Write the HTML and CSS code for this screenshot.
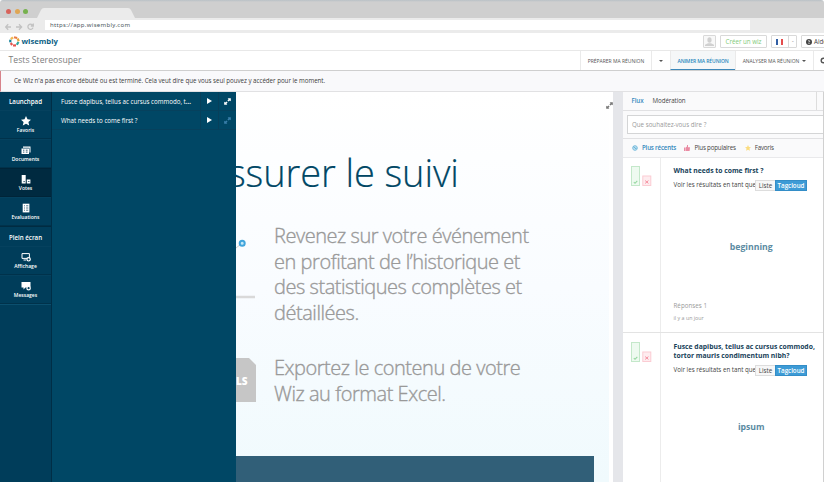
FILE: index.html
```html
<!DOCTYPE html>
<html lang="fr">
<head>
<meta charset="utf-8">
<title>Wisembly</title>
<link rel="stylesheet" href="styles.css">
</head>
<body>
<svg class="defs" width="0" height="0">
  <symbol id="expand" viewBox="0 0 8 8"><path d="M4.2 0.2H7.8V3.8L6.6 2.8 5.2 4.1 3.9 2.8 5.2 1.4ZM0.2 4.2 1.4 5.2 2.8 3.9 4.1 5.2 2.8 6.6 3.8 7.8H0.2Z"/></symbol>
  <symbol id="votes" viewBox="0 0 21 21"><rect x=".5" y=".5" width="8" height="19" fill="#eefaf0" stroke="#c4e8ca"/><path d="M2.8 16 4 17.3 6.3 14.8" fill="none" stroke="#94d79f" stroke-width="1.1"/><rect x="11.8" y="10" width="8" height="9.5" fill="#feecef" stroke="#fbccd3"/><path d="M14.2 14.6 17.4 17.4M17.4 14.6 14.2 17.4" stroke="#f68c9d" stroke-width="1"/></symbol>
</svg>
<div class="window">
  <div class="titlebar"><i class="dot red"></i><i class="dot amber"></i><i class="dot green"></i>
    <svg class="tab" width="100" height="10"><path d="M0 10 4 2Q5 0 7 0H91Q93 0 94 2L98 10Z" fill="#ebebeb"/></svg>
  </div>
  <div class="toolbar">
    <svg class="browser-nav" width="32" height="8" fill="none" stroke="#c2c2c2" stroke-width="1.3"><path d="M6 4H.8M3.2 1.3 .7 4 3.2 6.7M11 4H16.5M14 1.3 16.6 4 14 6.7M27.7 2.4A2.6 2.6 0 1 0 28 4.6M28.3.6V3H25.8"/></svg>
    <div class="url">https://app.wisembly.com</div>
  </div>
  <header class="brandbar">
    <svg class="mark" width="11" height="11" viewBox="0 0 11 11" fill="none" stroke-width="2.2"><path d="M1.8 3.2 4 1.3" stroke="#f3b94f"/><path d="M5 1.2 8.2 2" stroke="#e97b45"/><path d="M8.6 2.5 9.8 5.2" stroke="#e8a33c"/><path d="M9.5 6 7.8 8.8" stroke="#2ba7a0"/><path d="M7 9.4 4 9.5" stroke="#e5544e"/><path d="M3.2 9 1.7 7" stroke="#e5544e"/><path d="M1.3 6.3V3.7" stroke="#14839b"/></svg>
    <span class="brand">wisembly</span>
    <span class="box avatar"><svg width="9" height="9" fill="#d0d0d0"><ellipse cx="4.5" cy="3" rx="2.1" ry="2.8"/><path d="M0 9V7.8L3 6.3H6L9 7.8V9Z"/></svg></span>
    <span class="box create">Créer un wiz</span>
    <span class="box lang"><i class="flag"></i><b>-</b></span>
    <span class="box help"><svg width="6" height="6"><circle cx="3" cy="3" r="3" fill="#444"/><path d="M2 2.2Q3 .9 3.8 2.1 3.6 2.8 3 3.4M3 4V5" fill="none" stroke="#fff" stroke-width=".8"/></svg>Aide</span>
  </header>
  <nav class="wizbar">
    <span class="wiz">Tests Stereosuper</span>
    <span class="step prepare">PRÉPARER MA RÉUNION</span>
    <span class="step drop"><i class="caret"></i></span>
    <span class="step active">ANIMER MA RÉUNION</span>
    <span class="step analyse">ANALYSER MA RÉUNION<i class="caret"></i></span>
    <span class="step gear"><svg width="7" height="7"><circle cx="3.5" cy="3.5" r="2.3" fill="none" stroke="#555" stroke-width="1.4"/></svg></span>
  </nav>
  <div class="alert">Ce Wiz n'a pas encore débuté ou est terminé. Cela veut dire que vous seul pouvez y accéder pour le moment.</div>
  <main class="main">
    <aside class="launchpad">
      <h2>Launchpad</h2>
      <div class="tool"><svg width="10" height="10"><path d="M5 0 6.5 3.3 10 3.7 7.4 6 8.2 9.6 5 7.8 1.8 9.6 2.6 6 0 3.7 3.5 3.3Z"/></svg>Favoris</div>
      <div class="tool"><svg width="10" height="10"><path d="M2 1.5H9.5V7.5H8.5V2.8H2ZM.5 3.5H8V9H.5Z"/><path d="M2 5.2H3.4M4.8 5.2H6.6M2 7.1H3.4M4.8 7.1H6.6" stroke="#003a56" stroke-width=".8"/></svg>Documents</div>
      <div class="tool current"><svg width="10" height="10"><path d="M.7 1H4.7V9.5H.7ZM5.8 5.5H9.4V9.5H5.8Z"/><path d="M2.3 7.6H4M6.9 7.5H8.5" stroke="#002a40" stroke-width=".7"/></svg>Votes</div>
      <div class="tool"><svg width="10" height="10"><path d="M1.7.7H8.4V9.4H1.7Z"/><path d="M3 2.8H4M5.1 2.8H7.3M3 5H4M5.1 5H7.3M3 7.2H4M5.1 7.2H7.3" stroke="#003a56" stroke-width=".7"/></svg>Evaluations</div>
      <h2 class="second">Plein écran</h2>
      <div class="tool"><svg width="10" height="10"><path d="M1 1.6H8.4V6.4H1Z" fill="none" stroke="#fff"/><path d="M2.5 8H5" stroke="#fff"/><circle cx="7.6" cy="7.3" r="1.7" stroke="#fff" stroke-width="1.2" class="hole"/></svg>Affichage</div>
      <div class="tool"><svg width="10" height="10"><path d="M.5 1H9.5V6.5H4.5L2.5 8.5V6.5H.5Z"/><circle cx="7.6" cy="7.2" r="1.7" stroke="#fff" stroke-width="1.2" class="hole"/></svg>Messages</div>
      <div class="end"></div>
    </aside>
    <section class="drawer">
      <div class="item"><span>Fusce dapibus, tellus ac cursus commodo, t<b>...</b></span><i><svg width="5" height="6"><path d="M0 0 5 3 0 6Z"/></svg></i><i><svg width="7" height="7"><use href="#expand"/></svg></i></div>
      <div class="item"><span>What needs to come first ?</span><i><svg width="5" height="6"><path d="M0 0 5 3 0 6Z"/></svg></i><i class="dim"><svg width="7" height="7"><use href="#expand"/></svg></i></div>
    </section>
    <section class="slide">
      <svg class="enlarge" width="7" height="7"><use href="#expand"/></svg>
      <h1>ssurer le suivi</h1>
      <div class="feature first">
        <svg width="21" height="64"><path d="M0 10 5 6" stroke="#ccc"/><circle cx="6.2" cy="5.2" r="2.5" fill="#c5e8f7" stroke="#41a5dc" stroke-width="2"/><path d="M0 59H19" stroke="#d9d9d9" stroke-width="2.5"/></svg>
        <p>Revenez sur votre événement<br>en profitant de l’historique et<br>des statistiques complètes et<br>détaillées.</p>
      </div>
      <div class="feature excel">
        <div class="file">LS</div>
        <p>Exportez le contenu de votre<br>Wiz au format Excel.</p>
      </div>
      <div class="slide-foot"></div>
    </section>
    <aside class="feed">
      <div class="tabs"><b>Flux</b><span>Modération</span></div>
      <div class="compose"><div class="field">Que souhaitez-vous dire ?</div></div>
      <div class="sort">
        <svg width="6" height="6"><circle cx="3" cy="3" r="2.3" fill="#c6e4f2" stroke="#78bcdd"/><path d="M1.5 1.5 3 3.3H4.5" fill="none" stroke="#5caed6"/></svg><b>Plus récents</b>
        <svg class="thumb" width="6" height="6" fill="#ea8ba3"><path d="M0 2.5H1.3V6H0ZM1.7 2.6 3 1.5V0H4V2.3H6L5.6 6H1.7Z"/></svg><span>Plus populaires</span>
        <svg class="star" width="6" height="6" viewBox="0 0 10 10" fill="#fbdc7e"><path d="M5 0 6.5 3.3 10 3.7 7.4 6 8.2 9.6 5 7.8 1.8 9.6 2.6 6 0 3.7 3.5 3.3Z"/></svg><span>Favoris</span>
      </div>
      <article class="post">
        <div class="kind"><svg width="21" height="21"><use href="#votes"/></svg></div>
        <div class="body"><h3>What needs to come first ?</h3>
          <div class="view"><span>Voir les résultats en tant que</span><i>Liste</i><b>Tagcloud</b></div>
          <div class="cloud">beginning</div><div class="answers">Réponses 1</div><div class="time">il y a un jour</div></div>
      </article>
      <article class="post long">
        <div class="kind"><svg width="21" height="21"><use href="#votes"/></svg></div>
        <div class="body"><h3>Fusce dapibus, tellus ac cursus commodo,<br>tortor mauris condimentum nibh?</h3>
          <div class="view"><span>Voir les résultats en tant que</span><i>Liste</i><b>Tagcloud</b></div>
          <div class="cloud">ipsum</div></div>
      </article>
    </aside>
  </main>
</div>
</body>
</html>
```

FILE: styles.css
```css
* { box-sizing: border-box; }
body { margin: 0; overflow: hidden; font-family: "Open Sans", "Noto Sans", sans-serif; background: #fff; }
h1, h2, h3, p { margin: 0; font-weight: inherit; }
i { font-style: normal; }
svg { display: block; flex: none; }
.defs { position: absolute; }
.window { width: 824px; height: 482px; display: flex; flex-direction: column; overflow: hidden; white-space: nowrap; }
.titlebar { height: 18px; flex: none; background: linear-gradient(#b9c1c6 0, #cfcfcf 2px); border-radius: 3px 3px 0 0; display: flex; align-items: center; padding: 4px 0 0 6px; gap: 3.5px; }
.dot { width: 5px; height: 5px; border-radius: 50%; }
.red { background: #d8635b; } .amber { background: #dfa654; } .green { background: #76b14d; }
.tab { align-self: flex-end; margin-left: 5px; }
.toolbar { height: 15px; flex: none; background: #ebebeb; display: flex; align-items: flex-start; padding-top: 2px; }
.browser-nav { margin: 3px 8px 0 5px; }
.url { width: 705px; height: 10px; background: #fff; font-size: 6px; line-height: 11px; padding-left: 5px; color: #4b5760; font-family: "Noto Sans"; letter-spacing: .31px; }
.brandbar { height: 18px; flex: none; display: flex; align-items: center; background: #fff; border-bottom: 1px solid #e8e8e8; padding-left: 9px; }
.brand { margin: -2px 0 0 1.5px; width: 681.5px; flex: none; font-weight: 700; font-size: 7.7px; line-height: 14px; color: #0c5f85; }
.box { height: 13px; flex: none; border: 1px solid #d9d9d9; border-radius: 1px; display: flex; align-items: center; justify-content: center; }
.avatar { width: 13px; background: #f8f8f8; }
.create { width: 47px; margin-left: 4px; color: #82ca79; font-size: 6.2px; }
.lang { width: 26px; margin-left: 4px; justify-content: flex-start; font-size: 5px; color: #aaa; }
.flag { width: 7px; height: 6px; margin: 0 5px 0 4px; background: linear-gradient(90deg, #315fa5 33%, #fff 33% 66%, #e44d4d 66%); }
.lang b { border-left: 1px solid #d9d9d9; height: 11px; padding-left: 3px; line-height: 10px; }
.help { width: 30px; margin-left: 4px; gap: 2px; font-size: 6.2px; justify-content: flex-start; padding-left: 4px; color: #444; }
.wizbar { height: 20px; flex: none; display: flex; background: #fff; border-bottom: 1px solid #cfcfcf; }
.wiz { width: 580px; flex: none; padding-left: 8.5px; font-size: 8.6px; line-height: 19px; color: #7c7c7c; letter-spacing: .05px; }
.step { border-left: 1px solid #eaeaea; font-size: 5px; line-height: 18px; color: #555; display: flex; align-items: center; justify-content: center; flex: none; }
.prepare { width: 71px; } .drop { width: 19px; }
.step.active { width: 65px; height: 19px; padding-top: 1px; background: #f5f7f8; border-bottom: 1px solid #3c87b9; color: #2787bd; font-weight: 600; letter-spacing: -.1px; }
.analyse { width: 78px; } .gear { width: 20px; }
.caret { border: 2px solid transparent; border-top-color: #555; border-bottom: 0; margin-left: 3px; }
.drop .caret { margin: 0; }
.alert { height: 21px; flex: none; background: #f9f9fb; border-bottom: 1px solid #e1e1e3; border-left: 1px solid #d7838b; padding-left: 13px; font-size: 6.2px; line-height: 20px; color: #3c3c3c; letter-spacing: -.025px; }
.main { flex: 1; display: flex; min-height: 0; }
.launchpad { width: 52px; background: #003d5a; flex: none; color: #fff; border-right: 1px solid #002e46; }
.launchpad h2 { height: 18px; text-align: center; font-size: 6.2px; line-height: 19px; font-weight: 600; }
.launchpad .second { height: 20px; line-height: 21px; border-top: 1px solid #002b41; }
.tool { height: 29px; display: flex; flex-direction: column; align-items: center; padding-top: 5px; font-size: 5px; line-height: 7px; font-weight: 600; gap: 1px; border-top: 1px solid #05415e; border-bottom: 1px solid #00324b; }
.tool svg { fill: #fff; }
.tool .hole { fill: #003d5a; }
.tool.current { background: #002a40; border-color: #002438; }
.end { border-top: 1px solid #0b4f6e; }
.drawer { width: 184px; background: #004765; flex: none; color: #fff; font-size: 6.2px; }
.item { height: 19px; display: flex; border-bottom: 1px solid #06415d; }
.item span { width: 148px; padding-left: 9px; line-height: 19px; }
.item i { width: 18px; display: flex; align-items: center; justify-content: center; border-left: 1px solid #07405b; }
.item svg { fill: #fff; } .item .dim svg { fill: #397faa; }
.slide { width: 377px; position: relative; flex: none; background: linear-gradient(90deg, transparent 373px, #fff 373px), linear-gradient(#fff, #f9fcff 50%, #f0fafd); overflow: hidden; display: flex; flex-direction: column; }
.enlarge { position: absolute; right: 0; top: 10px; fill: #777; }
.slide h1 { height: 131px; padding-top: 53px; font-size: 38px; line-height: 54px; font-weight: 300; color: #004765; margin-left: -8px; letter-spacing: -.1px; -webkit-text-stroke: .2px; }
.feature { display: flex; font-size: 20px; line-height: 25.7px; font-weight: 300; color: #999; letter-spacing: -.46px; }
.feature p { margin: 0 0 0 17px; -webkit-text-stroke: .35px; }
.first { height: 132px; } .first svg { margin-top: 15px; }
.excel { height: 101px; } .file + p { margin-left: 18px; }
.file { width: 20px; height: 44px; margin-top: 3px; background: #c6c6c6; clip-path: polygon(0 0, 13px 0, 20px 7px, 20px 100%, 0 100%); color: #fff; font-size: 10px; font-weight: 800; line-height: 46px; letter-spacing: 0; }
.slide-foot { width: 358px; flex: 1; background: #315f78; }
.feed { width: 211px; flex: none; border-left: 10px solid #e5e6ea; color: #444; font-size: 6.2px; border-right: 1px solid #d0d0d0; }
.tabs { height: 18.5px; display: flex; gap: 9px; line-height: 18px; padding-left: 8.5px; background: #fafafb; border-bottom: 1px solid #e1e1e3; letter-spacing: -.08px; }
.tabs span { width: 164px; border-right: 1px solid #ddd; }
.tabs b, .sort b { color: #3489bd; font-weight: 600; }
.compose { height: 28px; background: #fafafb; border-bottom: 1px solid #e1e1e3; padding: 4px 0 0 4px; }
.field { height: 19px; border: 1px solid #d4d5d6; border-right: 0; background: #fff; padding-left: 4px; line-height: 18px; color: #999; }
.sort { height: 19px; display: flex; align-items: center; padding-left: 9px; background: #fafafb; border-bottom: 1px solid #e9e9eb; letter-spacing: -.2px; }
.sort b, .sort span { margin-left: 4px; }
.sort .thumb { margin-left: 8.5px; }
.sort .star { margin-left: 9px; }
.post { display: flex; height: 175px; border-bottom: 1px solid #e3e3e3; }
.kind { width: 38px; border-right: 1px solid #ececec; padding: 8px 0 0 8px; }
.body { flex: 1; padding: 8px 0 0 12.5px; }
h3 { font-size: 6.8px; line-height: 9px; font-weight: 700; color: #174259; }
.view { display: flex; height: 11px; line-height: 9px; margin-top: 5px; }
.view span { width: 81.5px; }
.view i { width: 20px; border: 1px solid #ddd; border-right: 0; background: #f7f7f7; text-align: center; }
.view b { width: 32px; background: #3d9bd6; border: 1px solid #338dc7; text-align: center; color: #fff; font-weight: 600; }
.cloud { height: 110px; padding-top: 50px; text-align: center; margin-left: 6px; font-size: 8.7px; line-height: 12px; font-weight: 700; color: #5b8ba2; }
.long .kind { padding-top: 9px; }
.long .body { padding-top: 9px; }
.long .cloud { padding-top: 45px; }
.answers { line-height: 9px; color: #999; letter-spacing: .05px; }
.time { font-size: 5.3px; line-height: 9px; margin-top: 4px; color: #999; }
```
